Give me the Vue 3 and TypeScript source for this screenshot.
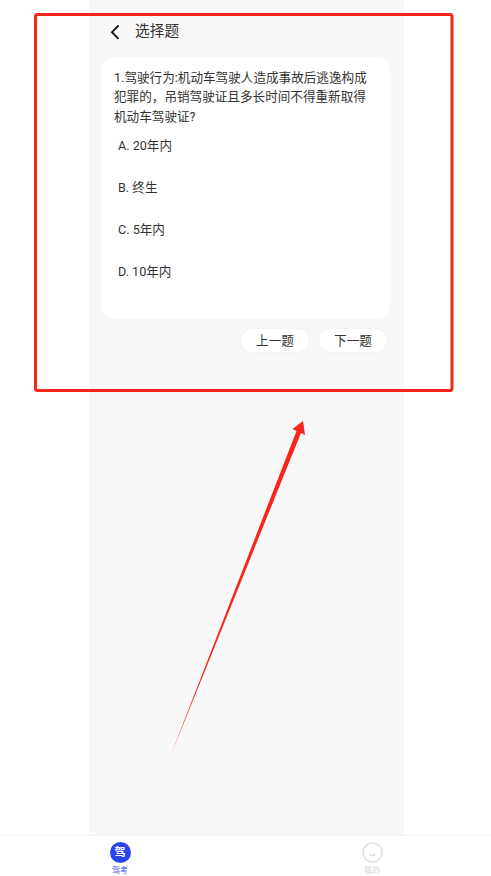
<script setup lang="ts">
const question = '1.驾驶行为:机动车驾驶人造成事故后逃逸构成犯罪的\uFF0C吊销驾驶证且多长时间不得重新取得机动车驾驶证?'
const options: string[] = ['A. 20年内', 'B. 终生', 'C. 5年内', 'D. 10年内']
</script>

<template>
  <div class="page">
    <main class="main">
      <section class="panel">
        <header class="head">
          <svg class="back" width="12" height="18" viewBox="0 0 12 18">
            <path d="M9.5 2.5 L3 9.2 L9.5 15.8" fill="none" stroke="#111" stroke-width="1.8" />
          </svg>
          <h1 class="title">选择题</h1>
        </header>
        <article class="card">
          <p class="question">{{ question }}</p>
          <ul class="options">
            <li v-for="o in options" :key="o" class="option">{{ o }}</li>
          </ul>
        </article>
        <div class="actions">
          <button class="btn" type="button">上一题</button>
          <button class="btn" type="button">下一题</button>
        </div>
      </section>
    </main>
    <nav class="tabs">
      <div class="tab active">
        <span class="badge">驾</span>
        <span class="label">驾考</span>
      </div>
      <div class="tab">
        <svg width="21" height="21" viewBox="0 0 21 21">
          <circle cx="10.5" cy="10.5" r="9.6" fill="none" stroke="#dcdcdc" stroke-width="1.4" />
          <path d="M7.5 12 Q10.5 15.5 13.5 12" fill="none" stroke="#dcdcdc" stroke-width="1.4" />
        </svg>
        <span class="label">我的</span>
      </div>
    </nav>

    <svg class="annotation" width="491" height="876" viewBox="0 0 491 876">
      <rect x="35.5" y="14.5" width="416.5" height="376" rx="2" fill="none" stroke="#f7261b" stroke-width="3" />
      <polygon points="170.5,756 296.5,431 292.5,429 303,421 305,435 301,433" fill="#f7261b" />
    </svg>
  </div>
</template>

<style>
html, body { margin: 0; background: #fff; }
</style>

<style scoped>
.page {
  position: relative;
  width: 491px;
  height: 876px;
  display: flex;
  flex-direction: column;
  overflow: hidden;
  background: #fff;
  font-family: "Roboto", "Noto Sans CJK SC", sans-serif;
  color: #333;
}
.main {
  flex: 1;
  min-height: 0;
  display: flex;
  padding-left: 89px;
}
.panel {
  width: 315px;
  box-sizing: border-box;
  padding: 0 14px 0 12px;
  background: #f8f8f8;
}
.head {
  height: 57px;
  box-sizing: border-box;
  padding: 21px 0 0 8px;
  display: flex;
  align-items: flex-start;
  gap: 14px;
}
.back { margin-top: 2px; }
.title {
  margin: 0;
  font-size: 14.7px;
  font-weight: 400;
  line-height: 20px;
  color: #333;
}
.card {
  height: 262px;
  box-sizing: border-box;
  padding: 11px 14px 0 13px;
  background: #fff;
  border-radius: 14px;
}
.question {
  margin: 0;
  font-size: 12.6px;
  line-height: 19.3px;
  color: #333;
}
.options {
  list-style: none;
  margin: 11px 0 0;
  padding: 0 0 0 4px;
}
.option {
  height: 42px;
  font-size: 12.6px;
  line-height: 18px;
  color: #333;
}
.actions {
  display: flex;
  justify-content: flex-end;
  gap: 8px;
  margin-top: 9px;
  padding-right: 2px;
}
.btn {
  width: 70px;
  height: 25px;
  padding: 0;
  border: 1px solid #f3f3f3;
  border-radius: 13px;
  background: #fff;
  font: inherit;
  font-size: 12.6px;
  line-height: 21px;
  color: #333;
}
.tabs {
  height: 41px;
  flex: none;
  box-sizing: border-box;
  border-top: 1px solid #f2f3fa;
  display: flex;
  justify-content: space-between;
  padding: 6px 107px 0 108px;
  background: #fff;
}
.tab {
  width: 24px;
  display: flex;
  flex-direction: column;
  align-items: center;
}
.badge {
  width: 21px;
  height: 21px;
  border-radius: 50%;
  background: #2b44ee;
  color: #fff;
  font-size: 11px;
  font-weight: 700;
  line-height: 21px;
  text-align: center;
}
.label {
  margin-top: 3px;
  font-size: 8px;
  line-height: 10px;
  color: #d2d2d2;
}
.active .label { color: #3f55e6; }
.annotation {
  position: absolute;
  left: 0;
  top: 0;
  pointer-events: none;
}
</style>
